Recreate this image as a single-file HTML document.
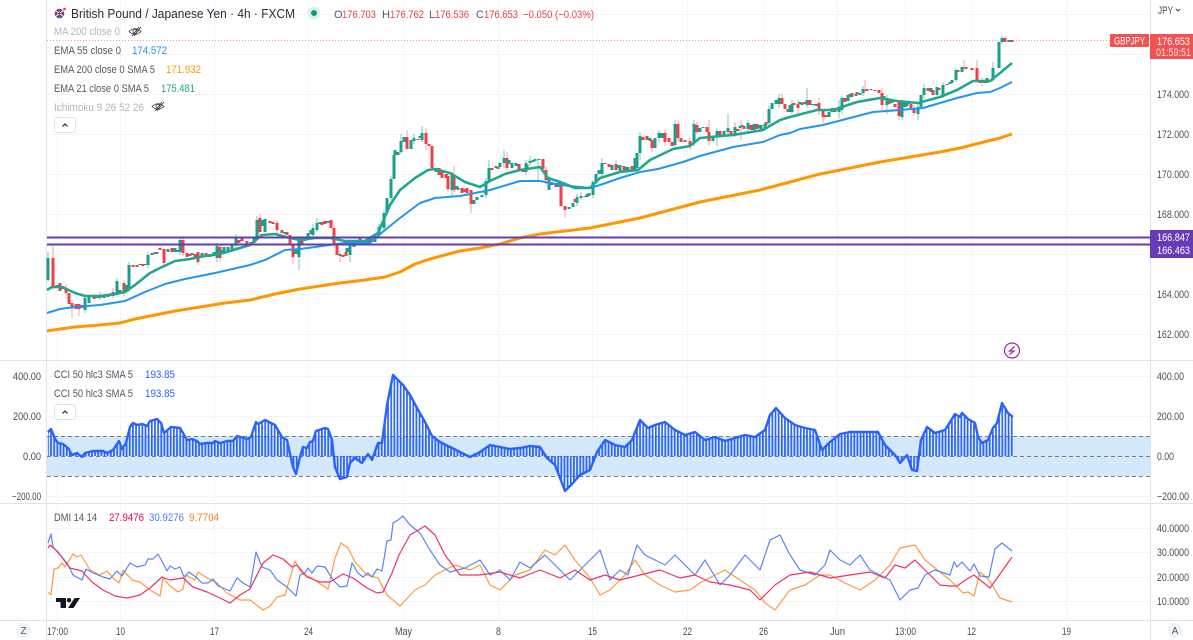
<!DOCTYPE html>
<html><head><meta charset="utf-8"><style>
html,body{margin:0;padding:0;background:#fff;width:1193px;height:640px;overflow:hidden}
svg{display:block;font-family:"Liberation Sans",sans-serif;font-size:11px}
.a{fill:#4a4d58}.l{fill:#555862}.h{fill:#b2b5be}
</style></head><body>
<svg width="1193" height="640" viewBox="0 0 1193 640" xmlns="http://www.w3.org/2000/svg">
<defs>
<pattern id="st" width="3.15" height="10" patternUnits="userSpaceOnUse" x="47"><rect width="1.7" height="10" fill="#2962ff"/></pattern>
</defs>
<rect width="1193" height="640" fill="#fff"/>
<!-- grid -->
<path d="M57.5 0V620M120.5 0V620M214.5 0V620M308.5 0V620M403.5 0V620M498.5 0V620M592.5 0V620M687.5 0V620M763.5 0V620M837.5 0V620M905.5 0V620M971.5 0V620M1066.5 0V620M47 14.5H1150M47 54.5H1150M47 94.5H1150M47 134.5H1150M47 174.5H1150M47 214.5H1150M47 254.5H1150M47 294.5H1150M47 334.5H1150M47 376.5H1150M47 416.5H1150M47 496.5H1150M47 528.5H1150M47 552.5H1150M47 577.5H1150M47 601.5H1150" stroke="#f3f5fa" fill="none"/>
<!-- CCI band -->
<rect x="47" y="436" width="1103" height="40" fill="#d3e8fb"/>
<path d="M47 436.5H1150M47 476.5H1150M47 456.5H1150" stroke="#787b86" stroke-dasharray="4 3" fill="none"/>
<!-- separators -->
<path d="M0 360.5H1193M0 503.5H1193M0 620.5H1193M46.5 0V640M1150.5 0V640" stroke="#e0e3eb" fill="none"/>
<!-- price line -->
<path d="M47 40.5H1110" stroke="#f23645" stroke-dasharray="1 2" opacity=".55" fill="none"/>
<!-- wicks -->
<path fill="none" stroke="#f5a3a1" stroke-width="1" d="M53 246V290M72 303V318M79 304V316M164 249V266M198 252V265M293 245V264M340 250V262M407 130V149M426 128V150M432 146V170M454 166V192M471 190V213M507 152V170M561 182V206M565 206V217M652 140V152M697 122V134M709 120V146M735 122V137M741 120V140M782 94V104M798 100V114M819 98V115M823 109V123M865 80V92M882 88V110M899 102V120M914 105V116M964 60V70M977 60V82M982 78V86M1005 36V42M66 284V296M113 288V298M124 280V296M183 236V256M220 244V262M260 214V236M277 220V234M334 224V248M448 172V192M546 166V184M616 160V174M665 130V146M678 120V142M690 138V150"/>
<path fill="none" stroke="#7cc7ba" stroke-width="1" d="M48 252V282M85 296V313M117 278V297M129 262V292M180 238V255M217 243V262M257 216V240M299 236V270M317 218V232M350 240V262M379 224V238M391 176V200M401 134V154M422 126V142M452 172V196M489 160V183M504 150V168M526 160V175M538 158V182M577 194V206M593 180V198M602 158V176M640 132V160M675 120V148M694 120V146M717 128V146M728 114V136M769 106V126M779 94V108M807 88V108M839 100V118M842 96V114M887 95V114M902 104V120M918 104V120M956 68V82M993 62V82M1002 36V44M100 292V300M148 252V268M236 234V248M313 224V238M384 210V230M414 134V144M486 178V198M530 156V166M581 192V200M659 130V142M748 120V132M792 100V114M863 86V96M924 84V98M943 82V98"/>
<!-- red bodies -->
<path fill="none" stroke="#f23f45" stroke-width="3" d="M53 258V287M57 285V288M60 283V291M66 288V293M69 293V304M72 303V308M76 304V309M79 304V309M94 295V299M113 292V296M124 283V292M133 265V267M137 265V267M160 248V250M164 249V263M172 248V252M183 240V253M187 253V257M198 252V262M206 253V256M210 254V257M220 247V258M242 238V241M247 241V244M251 242V244M260 218V232M270 221V223M277 223V230M282 230V233M287 232V235M290 235V245M293 245V257M322 222V225M331 220V228M334 228V245M337 245V255M343 255V257M360 238V242M363 241V244M407 137V149M418 139V140M426 133V144M429 144V146M432 146V168M439 168V175M442 172V178M448 176V189M454 175V190M462 188V193M467 188V193M471 190V204M492 168V170M507 158V168M519 164V170M523 169V172M543 159V169M546 170V180M552 182V185M556 183V187M561 182V206M565 206V210M585 196V197M605 163V164M609 164V167M616 164V170M624 166V171M632 166V171M647 136V140M652 140V148M665 133V142M669 138V142M672 142V146M678 124V138M681 138V142M685 140V142M690 141V146M697 125V132M707 127V132M709 132V141M720 131V135M731 131V134M744 126V129M751 125V130M757 124V129M772 103V104M782 98V104M785 104V109M788 109V112M798 104V108M794 103V105M810 100V105M819 103V109M823 109V117M826 115V117M835 108V112M845 98V102M852 93V97M867 89V91M875 90V91M879 90V93M882 93V105M889 100V104M899 102V116M914 108V113M928 88V91M933 90V95M958 70V72M966 67V69M977 68V80M980 80V83M984 82V83M1005 38V42M1012 40V42M63 286V289M82 305V308M97 296V298M143 264V266M155 252V254M190 254V256M195 254V258M239 240V243M273 222V224M302 241V244M325 221V224M346 252V256M368 240V243M446 174V178M465 189V192M498 167V169M527 165V168M575 199V202M643 137V140M675 138V141M738 129V131M766 122V125M804 102V104M857 92V94M895 104V107M911 104V108M939 88V90M972 68V70"/>
<!-- green bodies -->
<path fill="none" stroke="#1b9f8a" stroke-width="3" d="M48 258V280M85 298V310M89 296V303M100 296V298M104 296V298M108 295V297M117 281V295M129 265V290M140 264V265M145 264V265M148 255V265M152 253V255M157 252V254M168 249V252M175 248V252M180 240V252M192 253V255M202 253V256M214 252V255M217 246V258M224 247V252M228 247V252M232 245V250M236 238V245M254 237V243M257 220V237M265 219V232M299 238V257M305 238V241M308 233V240M313 228V235M317 223V230M328 221V223M350 242V255M354 242V247M356 240V244M367 240V242M371 238V242M375 236V242M379 227V235M384 213V228M387 198V213M391 179V198M394 155V179M398 152V155M401 141V152M404 137V142M411 140V149M414 138V141M422 133V140M436 168V172M452 175V190M458 188V190M474 200V204M477 197V200M482 195V197M486 181V195M489 168V181M496 166V168M500 163V167M504 158V163M512 163V168M516 163V166M526 163V172M530 161V163M535 159V161M539 159V160M549 178V190M559 182V187M569 207V209M573 203V207M577 197V203M581 196V198M589 193V196M593 182V195M596 174V183M602 163V174M612 165V170M620 165V171M628 167V172M635 158V170M637 153V168M640 136V153M655 138V148M659 133V138M662 133V138M675 124V145M694 124V143M700 128V132M703 127V128M713 136V141M717 131V136M724 131V135M735 127V134M740 126V128M748 123V129M754 124V130M761 125V130M765 124V128M769 109V123M772 103V109M776 100V104M779 98V104M792 104V112M790 105V112M802 103V105M807 100V105M813 104V105M829 112V117M832 108V112M839 108V112M842 98V110M848 95V101M856 94V96M860 93V95M863 89V93M871 89V90M887 98V105M902 102V117M905 102V107M909 102V104M918 107V114M921 95V107M924 88V95M937 87V95M943 85V95M947 84V85M952 80V83M956 70V80M962 67V72M987 78V83M993 68V80M999 42V68M1002 38V42M1009 40V42M111 294V296M120 290V293M126 285V290M178 250V252M222 250V254M262 220V226M285 232V234M296 250V254M311 230V234M320 222V224M340 254V256M347 248V252M395 150V155M420 136V138M457 186V189M485 191V193M509 160V164M533 160V162M587 194V197M599 170V174M618 165V168M626 167V170M650 138V141M728 128V132M742 125V127M759 125V128M800 102V104M816 104V106M850 94V97M884 96V99M892 100V103M907 103V106M931 88V92M950 82V84"/>
<!-- EMAs -->
<polyline fill="none" stroke="#ff9800" stroke-width="3" stroke-linejoin="round" points="47,331 60,329 75,327 100,325 120,323 135,319 150,316 175,311 200,307 225,303 250,300 275,294 300,289 320,286 340,283 365,280 385,277 400,272 415,264 430,259 445,255 460,251 480,248 500,244 520,238 540,234 565,231 590,228 615,223 640,218 670,210 700,202 730,196 760,190 790,182 820,174 850,168 880,162 910,157 940,152 960,148 980,143 1000,138 1012,134"/>
<polyline fill="none" stroke="#2196f3" stroke-width="2" stroke-linejoin="round" points="47,313 60,309 75,307 100,305 125,301 145,292 165,284 185,279 215,273 250,265 265,260 275,255 285,250 300,249 330,245 345,243 370,243 385,230 400,218 420,203 435,198 460,196 490,190 520,181 540,181 560,185 590,188 600,185 620,178 640,172 658,169 683,162 700,156 733,147 763,142 780,135 790,133 800,129 823,125 850,118 873,112 900,110 923,108 957,98 977,93 990,92 1000,88 1012,82"/>
<polyline fill="none" stroke="#1da88f" stroke-width="2.6" stroke-linejoin="round" points="47,290 52,287 62,287 75,293 85,296 100,296 115,294 125,292 135,285 150,273 160,268 175,261 190,259 205,256 220,254 240,248 250,245 262,235 275,234 290,238 300,240 315,238 330,238 345,241 365,241 378,233 390,205 400,190 415,178 428,170 435,169 450,173 465,182 480,187 490,181 505,174 520,170 540,167 548,178 560,182 575,188 590,188 600,178 620,172 638,170 650,160 673,149 690,146 700,138 733,135 763,130 780,120 790,117 817,110 833,110 857,102 880,98 897,101 918,103 940,97 957,90 973,81 990,81 1000,73 1012,63"/>
<!-- purple levels -->
<path d="M47 237.5H1150M47 244.5H1150" stroke="#673ab7" stroke-width="2" fill="none"/>
<!-- lightning -->
<circle cx="1012" cy="350.5" r="7.5" fill="#fff" stroke="#9c27b0" stroke-width="1.2"/>
<path d="M1014.5 346.5L1009.5 351H1014L1009.5 354.5" fill="none" stroke="#9c27b0" stroke-width="1.2"/>
<!-- CCI histogram + line -->
<polygon fill="url(#st)" points="48,456 48,432 51,429 55,439 58,443 63,444 68,448 72,455 77,453 82,457 85,453 93,451 103,451 107,453 113,450 119,441 122,449 126,443 130,427 133,423 137,425 142,424 147,426 150,421 157,419 161,423 164,433 171,427 180,428 187,440 192,439 197,441 200,444 207,443 213,443 215,441 220,443 227,441 233,441 237,436 247,439 251,437 256,422 258,424 265,420 275,425 282,437 287,440 293,467 296,474 300,457 303,447 307,448 310,442 313,441 316,431 325,428 328,429 332,440 335,467 340,479 347,477 350,463 355,458 362,463 368,454 372,460 378,443 382,443 387,405 393,375 398,380 403,385 410,395 417,408 425,422 432,436 440,442 450,447 460,452 470,457 480,452 490,445 500,447 510,449 520,448 530,446 540,447 547,458 555,465 565,491 572,484 580,475 590,470 597,452 605,440 615,445 625,447 632,440 640,420 648,428 655,425 665,422 675,430 685,435 695,432 705,440 715,437 725,441 735,438 745,435 755,437 765,430 770,415 776,408 785,418 795,425 805,428 815,430 822,450 830,442 840,434 850,432 865,432 878,432 885,445 895,455 900,463 907,455 912,470 917,471 921,440 927,427 935,433 945,430 955,414 960,417 962,413 968,419 975,423 978,437 982,443 988,440 993,428 997,423 1002,403 1008,413 1013,417 1013,456"/>
<polyline fill="none" stroke="#2962ff" stroke-width="2.4" stroke-linejoin="round" points="48,432 51,429 55,439 58,443 63,444 68,448 72,455 77,453 82,457 85,453 93,451 103,451 107,453 113,450 119,441 122,449 126,443 130,427 133,423 137,425 142,424 147,426 150,421 157,419 161,423 164,433 171,427 180,428 187,440 192,439 197,441 200,444 207,443 213,443 215,441 220,443 227,441 233,441 237,436 247,439 251,437 256,422 258,424 265,420 275,425 282,437 287,440 293,467 296,474 300,457 303,447 307,448 310,442 313,441 316,431 325,428 328,429 332,440 335,467 340,479 347,477 350,463 355,458 362,463 368,454 372,460 378,443 382,443 387,405 393,375 398,380 403,385 410,395 417,408 425,422 432,436 440,442 450,447 460,452 470,457 480,452 490,445 500,447 510,449 520,448 530,446 540,447 547,458 555,465 565,491 572,484 580,475 590,470 597,452 605,440 615,445 625,447 632,440 640,420 648,428 655,425 665,422 675,430 685,435 695,432 705,440 715,437 725,441 735,438 745,435 755,437 765,430 770,415 776,408 785,418 795,425 805,428 815,430 822,450 830,442 840,434 850,432 865,432 878,432 885,445 895,455 900,463 907,455 912,470 917,471 921,440 927,427 935,433 945,430 955,414 960,417 962,413 968,419 975,423 978,437 982,443 988,440 993,428 997,423 1002,403 1008,413 1013,417"/>
<!-- DMI -->
<polyline fill="none" stroke="#ff9a3c" stroke-width="1.2" stroke-linejoin="round" points="48,592 51,595 54,569 58,568 62,563 65,567 73,554 77,557 81,555 90,570 100,575 107,571 115,580 119,583 123,570 132,580 140,582 150,590 160,596 163,578 170,586 178,592 183,589 186,575 195,580 198,572 207,578 217,583 227,593 240,600 250,600 263,610 270,606 277,597 285,595 295,561 302,574 310,577 328,589 335,558 341,543 348,548 355,562 367,575 378,578 387,595 400,606 415,590 425,585 435,575 445,570 455,565 470,570 480,565 490,585 500,590 515,575 530,570 545,550 555,555 565,545 575,560 590,578 600,595 610,590 625,575 635,560 645,575 660,585 675,592 690,590 700,583 715,575 725,570 740,580 755,590 765,603 775,610 790,590 805,585 820,575 830,575 845,583 860,590 875,580 890,565 900,548 915,545 925,560 940,572 950,580 957,587 963,593 968,592 974,596 980,572 989,580 1000,598 1012,602"/>
<polyline fill="none" stroke="#5b85f5" stroke-width="1.2" stroke-linejoin="round" points="48,543 51,534 53,547 60,555 67,563 73,575 82,580 86,569 93,573 103,577 110,579 117,571 122,576 130,563 137,567 145,565 148,559 153,559 158,554 163,563 167,571 170,566 175,569 180,567 184,577 189,572 197,578 202,583 208,583 213,579 218,586 223,588 230,591 237,578 243,583 250,587 256,552 262,567 270,570 277,580 287,587 296,596 300,575 305,573 308,568 312,573 317,566 325,567 333,580 340,587 347,586 352,563 358,573 363,577 368,573 372,577 377,569 382,571 387,541 391,540 393,523 398,520 403,516 410,525 420,533 430,550 440,565 450,572 465,568 480,560 490,575 500,570 510,580 520,562 530,568 545,555 555,565 570,580 580,570 590,560 600,550 610,580 620,570 628,575 637,545 645,555 655,560 665,565 675,555 690,570 695,575 705,560 720,585 730,575 745,555 760,570 770,540 780,535 790,555 800,570 815,575 825,565 830,550 840,560 850,565 860,555 870,570 880,575 890,580 900,600 910,590 918,588 925,575 935,570 950,575 954,562 957,567 962,562 970,571 974,564 980,576 989,577 995,549 1002,543 1012,551"/>
<polyline fill="none" stroke="#f0306e" stroke-width="1.2" stroke-linejoin="round" points="48,548 50,545 58,552 70,568 82,571 92,582 103,590 115,596 127,598 140,595 150,588 162,577 170,580 183,578 193,587 207,592 220,598 230,603 240,595 250,589 263,563 273,555 283,559 292,567 297,565 307,577 320,582 330,582 343,574 353,578 367,588 377,593 383,592 392,573 399,555 410,535 425,526 435,535 445,555 460,575 480,575 500,572 520,578 540,570 560,578 575,570 590,580 605,575 620,580 640,575 660,570 680,578 695,575 710,582 730,585 750,590 760,600 775,585 790,575 810,572 830,578 850,575 870,572 885,578 895,565 905,568 915,560 925,570 940,585 950,586 957,586 967,579 974,575 990,588 1012,557"/>
<!-- TV logo -->
<path d="M56 598H66V608H60.5V602H56Z" fill="#131722"/><circle cx="69" cy="600.2" r="2.2" fill="#131722"/><path d="M74.5 598H80L73.5 608H68Z" fill="#131722"/>
<!-- header -->
<circle cx="59.5" cy="13.5" r="4.8" fill="#3b4a8c"/><path d="M55.5 10.5L63.5 16.5M63.5 10.5L55.5 16.5M59.5 8.7V18.3M54.7 13.5H64.3" stroke="#e8dfe4" stroke-width="1.1"/><path d="M59.5 8.7V18.3M54.7 13.5H64.3" stroke="#d8344a" stroke-width=".9"/>
<circle cx="64.5" cy="9" r="2.6" fill="#fff"/><circle cx="64.5" cy="9" r="1.3" fill="#e0304a"/>
<text x="71" y="18" font-size="13" fill="#2a2e39" textLength="224" lengthAdjust="spacingAndGlyphs">British Pound / Japanese Yen · 4h · FXCM</text>
<circle cx="314" cy="13" r="6.5" fill="#dff1ed"/><circle cx="314" cy="13" r="3" fill="#089981"/>
<g font-size="11"><text x="334" y="18" class="l">O</text><text x="342" y="18" fill="#f23f45" textLength="34" lengthAdjust="spacingAndGlyphs">176.703</text><text x="382" y="18" class="l">H</text><text x="390" y="18" fill="#f23f45" textLength="34" lengthAdjust="spacingAndGlyphs">176.762</text><text x="429" y="18" class="l">L</text><text x="435" y="18" fill="#f23f45" textLength="34" lengthAdjust="spacingAndGlyphs">176.536</text><text x="476" y="18" class="l">C</text><text x="484" y="18" fill="#f23f45" textLength="34" lengthAdjust="spacingAndGlyphs">176.653</text><text x="523" y="18" fill="#f23f45" textLength="71" lengthAdjust="spacingAndGlyphs">−0.050 (−0.03%)</text></g>
<text x="54" y="35" class="h" textLength="66" lengthAdjust="spacingAndGlyphs">MA 200 close 0</text>
<text x="54" y="54" class="l" textLength="67" lengthAdjust="spacingAndGlyphs">EMA 55 close 0</text><text x="132" y="54" fill="#2196f3" textLength="35" lengthAdjust="spacingAndGlyphs">174.572</text>
<text x="54" y="73" class="l" textLength="101" lengthAdjust="spacingAndGlyphs">EMA 200 close 0 SMA 5</text><text x="166" y="73" fill="#ff9800" textLength="35" lengthAdjust="spacingAndGlyphs">171.932</text>
<text x="54" y="92" class="l" textLength="95" lengthAdjust="spacingAndGlyphs">EMA 21 close 0 SMA 5</text><text x="161" y="92" fill="#1da88f" textLength="34" lengthAdjust="spacingAndGlyphs">175.481</text>
<text x="54" y="111" class="h" textLength="90" lengthAdjust="spacingAndGlyphs">Ichimoku 9 26 52 26</text>
<g fill="none" stroke="#2a2e39" stroke-width=".8" transform="translate(135 31.5)"><path d="M-6 0Q0-5.5 6 0Q0 5.5-6 0Z"/><circle r="2"/><path d="M-3 4.5L4 -4.5M-1 4.5L6 -4.5"/></g>
<g fill="none" stroke="#2a2e39" stroke-width=".8" transform="translate(158 106.5)"><path d="M-6 0Q0-5.5 6 0Q0 5.5-6 0Z"/><circle r="2"/><path d="M-3 4.5L4 -4.5M-1 4.5L6 -4.5"/></g>
<rect x="54.5" y="117.5" width="21" height="15" rx="2" fill="#fff" stroke="#e0e3eb"/><path d="M62.5 126.5L65 124L67.5 126.5" fill="none" stroke="#131722" stroke-width="1.1"/>
<!-- CCI legend -->
<text x="54" y="378" class="l" textLength="79" lengthAdjust="spacingAndGlyphs">CCI 50 hlc3 SMA 5</text><text x="145" y="378" fill="#2962ff" textLength="30" lengthAdjust="spacingAndGlyphs">193.85</text>
<text x="54" y="397" class="l" textLength="79" lengthAdjust="spacingAndGlyphs">CCI 50 hlc3 SMA 5</text><text x="145" y="397" fill="#2962ff" textLength="30" lengthAdjust="spacingAndGlyphs">193.85</text>
<rect x="54.5" y="404.5" width="21" height="15" rx="2" fill="#fff" stroke="#e0e3eb"/><path d="M62.5 413.5L65 411L67.5 413.5" fill="none" stroke="#131722" stroke-width="1.1"/>
<!-- DMI legend -->
<text x="54" y="521" class="l" textLength="43" lengthAdjust="spacingAndGlyphs">DMI 14 14</text><text x="109" y="521" fill="#f50057" textLength="35" lengthAdjust="spacingAndGlyphs">27.9476</text><text x="149" y="521" fill="#4d7cff" textLength="35" lengthAdjust="spacingAndGlyphs">30.9276</text><text x="189" y="521" fill="#ff7a1a" textLength="30" lengthAdjust="spacingAndGlyphs">9.7704</text>
<!-- left axis -->
<g class="a"><text x="13" y="380" textLength="28" lengthAdjust="spacingAndGlyphs">400.00</text><text x="13" y="420" textLength="28" lengthAdjust="spacingAndGlyphs">200.00</text><text x="23" y="460" textLength="18" lengthAdjust="spacingAndGlyphs">0.00</text><text x="12" y="500" textLength="29" lengthAdjust="spacingAndGlyphs">−200.00</text></g>
<!-- right axis -->
<g class="a"><text x="1158" y="14" textLength="15" lengthAdjust="spacingAndGlyphs">JPY</text>
<text x="1157" y="98" textLength="32" lengthAdjust="spacingAndGlyphs">174.000</text><text x="1157" y="138" textLength="32" lengthAdjust="spacingAndGlyphs">172.000</text><text x="1157" y="178" textLength="32" lengthAdjust="spacingAndGlyphs">170.000</text><text x="1157" y="218" textLength="32" lengthAdjust="spacingAndGlyphs">168.000</text><text x="1157" y="298" textLength="32" lengthAdjust="spacingAndGlyphs">164.000</text><text x="1157" y="338" textLength="32" lengthAdjust="spacingAndGlyphs">162.000</text>
<text x="1157" y="380" textLength="27" lengthAdjust="spacingAndGlyphs">400.00</text><text x="1157" y="420" textLength="27" lengthAdjust="spacingAndGlyphs">200.00</text><text x="1157" y="460" textLength="17" lengthAdjust="spacingAndGlyphs">0.00</text><text x="1157" y="500" textLength="32" lengthAdjust="spacingAndGlyphs">−200.00</text>
<text x="1157" y="532" textLength="32" lengthAdjust="spacingAndGlyphs">40.0000</text><text x="1157" y="556" textLength="32" lengthAdjust="spacingAndGlyphs">30.0000</text><text x="1157" y="581" textLength="32" lengthAdjust="spacingAndGlyphs">20.0000</text><text x="1157" y="605" textLength="32" lengthAdjust="spacingAndGlyphs">10.0000</text></g>
<path d="M1176 9L1178 11L1180 9" fill="none" stroke="#434651"/>
<!-- labels -->
<rect x="1110" y="34" width="39" height="13" rx="1" fill="#f05350"/><text x="1114" y="44.500" fill="#fff" font-size="11" textLength="31" lengthAdjust="spacingAndGlyphs">GBPJPY</text>
<rect x="1150" y="34" width="43" height="25" fill="#f05350"/><text x="1157" y="45" fill="#fff" textLength="33" lengthAdjust="spacingAndGlyphs">176.653</text><text x="1156" y="56" fill="#fff" opacity=".85" textLength="35" lengthAdjust="spacingAndGlyphs">01:59:51</text>
<rect x="1150" y="230" width="43" height="14" fill="#673ab7"/><rect x="1150" y="244" width="43" height="14" fill="#673ab7"/><text x="1157" y="241" fill="#fff" textLength="33" lengthAdjust="spacingAndGlyphs">166.847</text><text x="1157" y="254" fill="#fff" textLength="33" lengthAdjust="spacingAndGlyphs">166.463</text>
<!-- time axis -->
<g class="a"><text x="47" y="635" textLength="21" lengthAdjust="spacingAndGlyphs">17:00</text><text x="116" y="635" textLength="9" lengthAdjust="spacingAndGlyphs">10</text><text x="210" y="635" textLength="9" lengthAdjust="spacingAndGlyphs">17</text><text x="304" y="635" textLength="9" lengthAdjust="spacingAndGlyphs">24</text><text x="395" y="635" textLength="17" lengthAdjust="spacingAndGlyphs">May</text><text x="496" y="635" textLength="5" lengthAdjust="spacingAndGlyphs">8</text><text x="588" y="635" textLength="9" lengthAdjust="spacingAndGlyphs">15</text><text x="683" y="635" textLength="9" lengthAdjust="spacingAndGlyphs">22</text><text x="759" y="635" textLength="9" lengthAdjust="spacingAndGlyphs">26</text><text x="830" y="635" textLength="15" lengthAdjust="spacingAndGlyphs">Jun</text><text x="895" y="635" textLength="21" lengthAdjust="spacingAndGlyphs">13:00</text><text x="967" y="635" textLength="9" lengthAdjust="spacingAndGlyphs">12</text><text x="1062" y="635" textLength="9" lengthAdjust="spacingAndGlyphs">19</text></g>
<circle cx="23.500" cy="630.500" r="7.500" fill="#f0f3fa"/><text x="23.500" y="634" text-anchor="middle" font-size="10" class="l">Z</text>
<circle cx="1175" cy="630.500" r="7.500" fill="#f0f3fa"/><text x="1175" y="634" text-anchor="middle" font-size="10" class="l">A</text>
</svg>
</body></html>
